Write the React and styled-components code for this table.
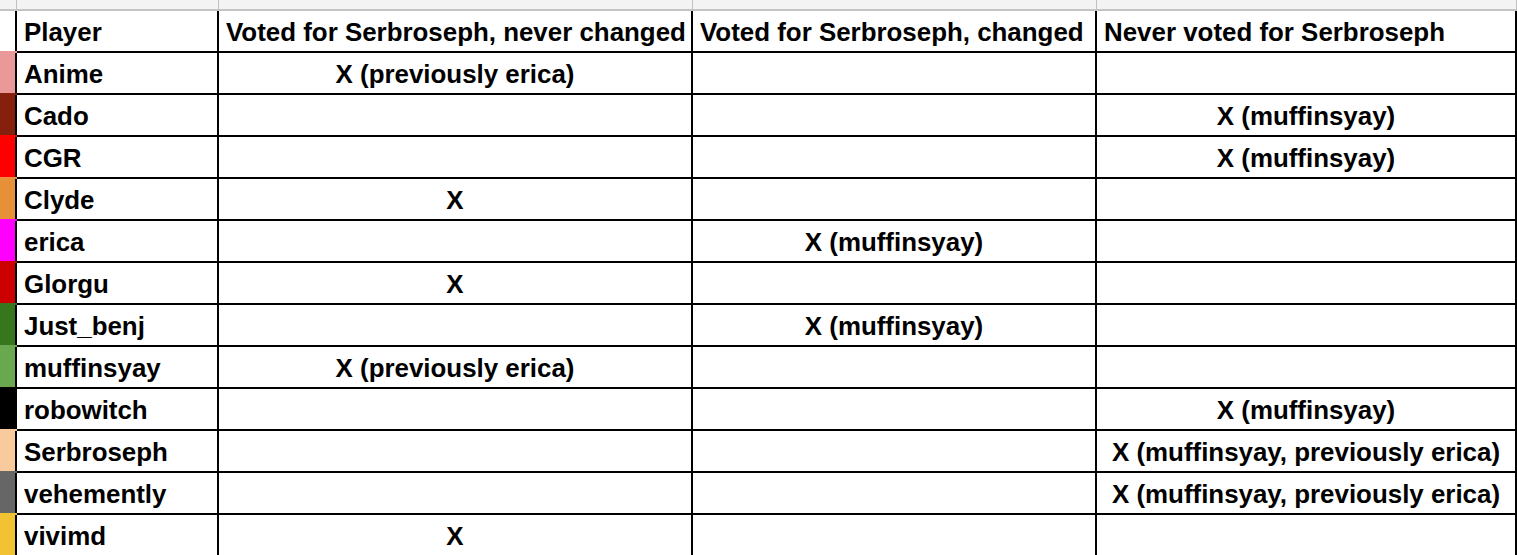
import React from "react";
import styled, { createGlobalStyle } from "styled-components";

const GlobalStyle = createGlobalStyle`
	html, body {
		margin: 0;
		padding: 0;
		background: #ffffff;
		overflow: hidden;
	}
	body {
		font-family: "Liberation Sans", Arial, sans-serif;
	}
`;

const columns = [
	"Voted for Serbroseph, never changed",
	"Voted for Serbroseph, changed",
	"Never voted for Serbroseph",
];

const players = [
	{ name: "Anime", color: "#ea9999", votes: ["X (previously erica)", "", ""] },
	{ name: "Cado", color: "#85200c", votes: ["", "", "X (muffinsyay)"] },
	{ name: "CGR", color: "#ff0000", votes: ["", "", "X (muffinsyay)"] },
	{ name: "Clyde", color: "#e69138", votes: ["X", "", ""] },
	{ name: "erica", color: "#ff00ff", votes: ["", "X (muffinsyay)", ""] },
	{ name: "Glorgu", color: "#cc0000", votes: ["X", "", ""] },
	{ name: "Just_benj", color: "#38761d", votes: ["", "X (muffinsyay)", ""] },
	{ name: "muffinsyay", color: "#6aa84f", votes: ["X (previously erica)", "", ""] },
	{ name: "robowitch", color: "#000000", votes: ["", "", "X (muffinsyay)"] },
	{ name: "Serbroseph", color: "#f9cb9c", votes: ["", "", "X (muffinsyay, previously erica)"] },
	{ name: "vehemently", color: "#666666", votes: ["", "", "X (muffinsyay, previously erica)"] },
	{ name: "vivimd", color: "#f1c232", votes: ["X", "", ""] },
];

function App() {
	return (
		<>
			<GlobalStyle />
			<Sheet>
				{[0, 1, 2, 3, 4].map((i) => (
					<ColumnHead key={"h" + i} />
				))}

				<ColorCell $color="#ffffff" $first />
				<Cell>Player</Cell>
				{columns.map((c) => (
					<Cell key={c}>{c}</Cell>
				))}

				{players.map((p) => (
					<React.Fragment key={p.name}>
						<ColorCell $color={p.color} />
						<Cell>{p.name}</Cell>
						{p.votes.map((v, i) => (
							<Cell key={i} $center>
								{v}
							</Cell>
						))}
					</React.Fragment>
				))}
			</Sheet>
		</>
	);
}

export default App;

const Sheet = styled.div`
	display: grid;
	grid-template-columns: 17px 202px 474px 404px 420px;
	grid-template-rows: 11px;
	grid-auto-rows: 42px;
	width: 1517px;
	font-family: "Liberation Sans", Arial, sans-serif;
	font-weight: bold;
	font-size: 25.9px;
	color: #000000;
`;

const ColumnHead = styled.div`
	box-sizing: border-box;
	background: #f3f3f3;
	border-right: 1px solid #c0c0c0;
	border-bottom: 2px solid #c4c4c4;
`;

const ColorCell = styled.div`
	box-sizing: border-box;
	background: ${(p) => p.$color};
	border-right: 2px solid #000000;
	box-shadow: ${(p) => (p.$first ? "none" : `0 -2px 0 ${p.$color}`)};
	position: relative;
`;

const Cell = styled.div`
	box-sizing: border-box;
	display: flex;
	align-items: flex-end;
	justify-content: ${(p) => (p.$center ? "center" : "flex-start")};
	padding: 0 7px 4px 7px;
	line-height: 29px;
	white-space: nowrap;
	border-right: 2px solid #000000;
	border-bottom: 2px solid #000000;
	background: #ffffff;
`;
